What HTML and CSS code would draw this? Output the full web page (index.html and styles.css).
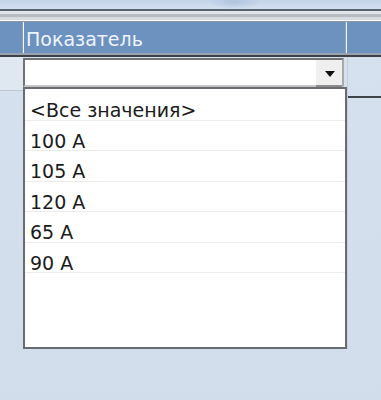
FILE: index.html
```html
<!DOCTYPE html>
<html lang="ru">
<head>
  <meta charset="UTF-8">
  <title>Показатель</title>
  <link rel="stylesheet" href="styles.css">
</head>
<body>
  <div class="sky"></div>
  <div class="toolbar"></div>

  <div class="header">
    <div class="hcell hcell-gutter"></div>
    <div class="hcell hcell-title">Показатель</div>
    <div class="hcell hcell-rest"></div>
  </div>
  <div class="header-edge"></div>

  <div class="grid">
    <div class="gutter gutter-left">
      <div class="row-line"></div>
    </div>

    <div class="filter">
      <div class="combo">
        <div class="combo-field"></div>
        <div class="combo-btn">
          <svg width="10" height="6" viewBox="0 0 10 6"><polygon points="0,0 10,0 5,6" fill="#111"/></svg>
        </div>
      </div>
      <ul class="options">
        <li>&lt;Все значения&gt;</li>
        <li>100 A</li>
        <li>105 A</li>
        <li>120 A</li>
        <li>65 A</li>
        <li>90 A</li>
      </ul>
    </div>

    <div class="gutter gutter-right">
      <div class="row-line dark"></div>
    </div>
  </div>
</body>
</html>
```

FILE: styles.css
```css
* { box-sizing: border-box; }

body {
  margin: 0;
  height: 400px;
  overflow: hidden;
  background: linear-gradient(#d6e1ee, #d1ddeb);
  font-family: 'DejaVu Sans', Verdana, sans-serif;
}

.sky {
  height: 9px;
  background:
    radial-gradient(ellipse 26px 7px at 235px 2px, rgba(160, 183, 212, 0.6), rgba(160, 183, 212, 0)),
    linear-gradient(#c3d4ea, #d3e0ef);
}

.toolbar {
  height: 13px;
  background: linear-gradient(
    #59636f 0, #59636f 2px,
    #e1e5ea 2px, #e1e5ea 5px,
    #b6bbc2 5px, #b6bbc2 8px,
    #d8dce1 8px, #d8dce1 11px,
    #f7f9fb 11px, #f7f9fb 12px,
    #8d97a3 12px
  );
}

/* column header */
.header {
  display: flex;
  height: 31px;
  background: #6d92bf;
  color: #eef4fc;
  font-size: 19px;
}

.hcell-gutter {
  width: 23px;
  border-right: 1px solid #8ea0b6;
}

.hcell-title {
  width: 323px;
  padding: 6px 0 0 2px;
  line-height: 22px;
  border-left: 1px solid #f4f7fb;
  border-right: 1px solid #8ea0b6;
}

.hcell-rest {
  flex-grow: 1;
  border-left: 1px solid #f4f7fb;
}

.header-edge {
  height: 4px;
  background: #9aa2ac;
  border-bottom: 2px solid #3c4148;
}

/* filter row */
.grid {
  display: flex;
}

.gutter {
  flex-shrink: 0;
}

.gutter-left {
  width: 23px;
  padding-top: 33px;
  background: linear-gradient(#dfe7f1 0, #dfe7f1 33px, transparent 33px);
}

.gutter-right {
  flex-grow: 1;
  padding-top: 39px;
  border-left: 1px solid #c3cfdd;
}

.row-line {
  height: 1px;
  background: #bcc7d4;
}

.row-line.dark {
  height: 2px;
  background: #3f444b;
}

.filter {
  width: 324px;
  padding-top: 1px;
}

.combo {
  display: flex;
  width: 321px;
  height: 29px;
  background: white;
  border: 2px solid;
  border-color: #737373 #a9a9a9 #c4c4c4 #737373;
}

.combo-field {
  flex-grow: 1;
}

.combo-btn {
  width: 26px;
  display: flex;
  align-items: center;
  justify-content: center;
  padding: 2px 0 0 1px;
  background: #efefef;
  border-bottom: 2px solid #8c8c8c;
  margin-bottom: -2px;
}

.options {
  list-style: none;
  margin: 0;
  padding: 1px 0 0;
  height: 262px;
  background: #fff;
  border: 2px solid #686c71;
  font-size: 19px;
  color: #1b1b1b;
}

.options li {
  height: 30.5px;
  padding: 9px 0 0 5px;
  line-height: 22px;
  border-bottom: 1px solid #ececec;
}
```
